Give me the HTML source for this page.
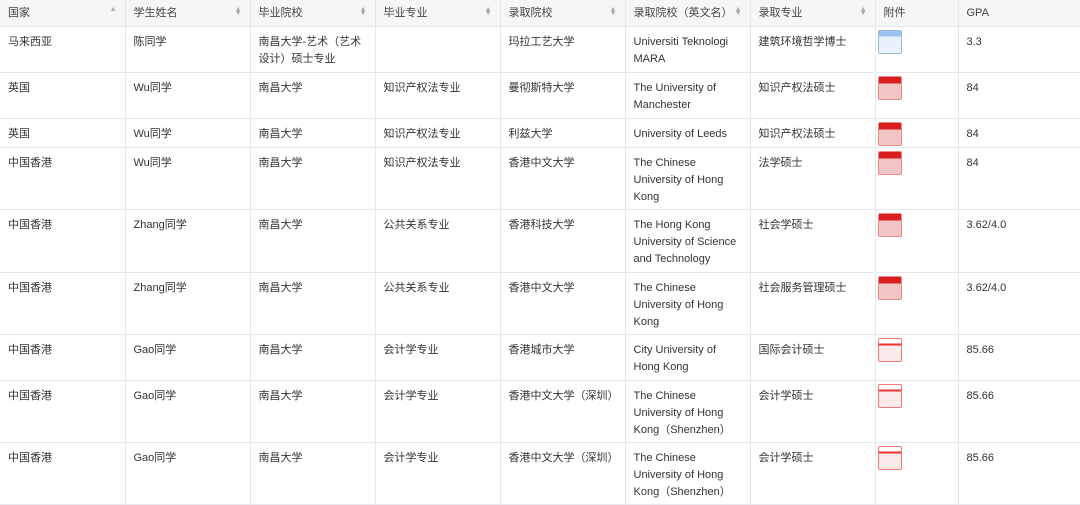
<!DOCTYPE html><html><head><meta charset="utf-8"><style>
body{margin:0;width:1080px;height:503px;overflow:hidden;background:#fff;font-family:"Liberation Sans","Noto Sans CJK SC",sans-serif;font-size:11px;color:#333}
table{border-collapse:collapse;table-layout:fixed;width:1080px}
td,th{border-right:1px solid #e6e8eb;border-bottom:1px solid #e6e8eb;padding:7px 8px 0 8px;vertical-align:top;line-height:17px;text-align:left;font-weight:normal}
th{background:#f5f6f7;height:21px;padding-top:5px;color:#444;position:relative}
th .s{position:absolute;right:8px;top:8px;font-size:7px;color:#aaa;line-height:4px}
.i{width:22px;height:22px;border-radius:2px;margin-top:-4px;margin-left:-6px;background:linear-gradient(#d81e1e 0 30%,#f3c6c6 30%);border:1px solid #e88}
.b{background:linear-gradient(#9cc4f0 0 25%,#e8f2fc 25%);border-color:#9bc}
.w{background:linear-gradient(#fff 0 20%,#e33 20% 30%,#fbeaea 30%);border-color:#e77}
</style></head><body><table>
<colgroup><col width="125"><col width="125"><col width="125"><col width="125"><col width="125"><col width="125"><col width="125"><col width="83"><col width="122"></colgroup>
<tr><th>国家<span class="s">▲</span></th><th>学生姓名<span class="s">▲<br>▼</span></th><th>毕业院校<span class="s">▲<br>▼</span></th><th>毕业专业<span class="s">▲<br>▼</span></th><th>录取院校<span class="s">▲<br>▼</span></th><th>录取院校（英文名）<span class="s">▲<br>▼</span></th><th>录取专业<span class="s">▲<br>▼</span></th><th>附件</th><th>GPA</th></tr>
<tr style="height:46px"><td>马来西亚</td><td>陈同学</td><td>南昌大学-艺术（艺术设计）硕士专业</td><td></td><td>玛拉工艺大学</td><td>Universiti Teknologi MARA</td><td>建筑环境哲学博士</td><td><div class="i b"></div></td><td>3.3</td></tr>
<tr style="height:46px"><td>英国</td><td>Wu同学</td><td>南昌大学</td><td>知识产权法专业</td><td>曼彻斯特大学</td><td>The University of Manchester</td><td>知识产权法硕士</td><td><div class="i"></div></td><td>84</td></tr>
<tr style="height:29px"><td>英国</td><td>Wu同学</td><td>南昌大学</td><td>知识产权法专业</td><td>利兹大学</td><td>University of Leeds</td><td>知识产权法硕士</td><td><div class="i"></div></td><td>84</td></tr>
<tr style="height:62px"><td>中国香港</td><td>Wu同学</td><td>南昌大学</td><td>知识产权法专业</td><td>香港中文大学</td><td>The Chinese University of Hong Kong</td><td>法学硕士</td><td><div class="i"></div></td><td>84</td></tr>
<tr style="height:63px"><td>中国香港</td><td>Zhang同学</td><td>南昌大学</td><td>公共关系专业</td><td>香港科技大学</td><td>The Hong Kong University of Science and Technology</td><td>社会学硕士</td><td><div class="i"></div></td><td>3.62/4.0</td></tr>
<tr style="height:62px"><td>中国香港</td><td>Zhang同学</td><td>南昌大学</td><td>公共关系专业</td><td>香港中文大学</td><td>The Chinese University of Hong Kong</td><td>社会服务管理硕士</td><td><div class="i"></div></td><td>3.62/4.0</td></tr>
<tr style="height:46px"><td>中国香港</td><td>Gao同学</td><td>南昌大学</td><td>会计学专业</td><td>香港城市大学</td><td>City University of Hong Kong</td><td>国际会计硕士</td><td><div class="i w"></div></td><td>85.66</td></tr>
<tr style="height:62px"><td>中国香港</td><td>Gao同学</td><td>南昌大学</td><td>会计学专业</td><td>香港中文大学（深圳）</td><td>The Chinese University of Hong Kong（Shenzhen）</td><td>会计学硕士</td><td><div class="i w"></div></td><td>85.66</td></tr>
<tr style="height:62px"><td>中国香港</td><td>Gao同学</td><td>南昌大学</td><td>会计学专业</td><td>香港中文大学（深圳）</td><td>The Chinese University of Hong Kong（Shenzhen）</td><td>会计学硕士</td><td><div class="i w"></div></td><td>85.66</td></tr>
</table></body></html>
